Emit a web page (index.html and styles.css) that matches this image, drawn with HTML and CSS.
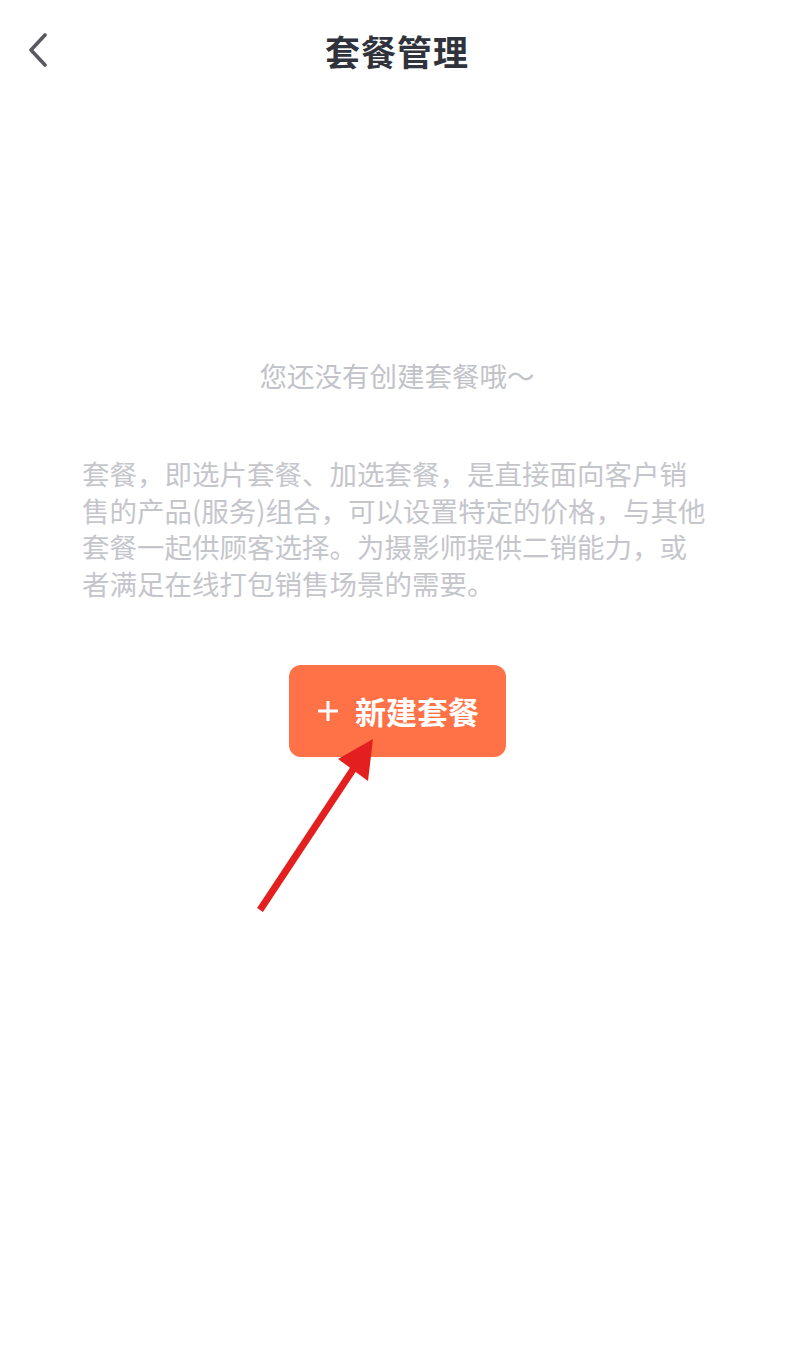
FILE: index.html
```html
<!DOCTYPE html>
<html lang="zh-CN">
<head>
  <meta charset="UTF-8">
  <meta name="viewport" content="width=device-width, initial-scale=1.0">
  <title>套餐管理</title>
  <link rel="stylesheet" href="styles.css">
</head>
<body>
  <header class="nav">
    <div class="back">
      <svg width="20" height="34" viewBox="0 0 20 34">
        <path d="M17 2 L3 17 L17 32" fill="none" stroke="#58595e" stroke-width="3.6" stroke-linecap="round" stroke-linejoin="round"/>
      </svg>
    </div>
    <div class="title">套餐管理</div>
  </header>
  <main class="content">
    <div class="empty">您还没有创建套餐哦～</div>
    <p class="desc">套餐，即选片套餐、加选套餐，是直接面向客户销售的产品(服务)组合，可以设置特定的价格，与其他套餐一起供顾客选择。为摄影师提供二销能力，或者满足在线打包销售场景的需要。</p>
    <button class="create">
      <svg class="plus" width="20" height="20" viewBox="0 0 20 20">
        <path d="M10 0 V20 M0 10 H20" stroke="#fff" stroke-width="3"/>
      </svg>
      新建套餐
    </button>
  </main>
  <svg class="arrow" width="799" height="1372" viewBox="0 0 799 1372">
    <line x1="260" y1="910" x2="354" y2="768" stroke="#e3201f" stroke-width="7"/>
    <polygon points="373,739 338,759 368,781" fill="#e3201f"/>
  </svg>
</body>
</html>
```

FILE: styles.css
```css
html, body { height: 100%; }

body {
  margin: 0;
  background-color: #fff;
  font-family: "Noto Sans CJK SC", "Noto Sans", sans-serif;
  position: relative;
}

.nav {
  height: 100px;
  display: flex;
  align-items: center;
  justify-content: center;
  padding-right: 5px;
  position: relative;
}

.back {
  position: absolute;
  left: 28px;
  top: 33px;
  width: 20px;
  height: 34px;
}

.title {
  font-size: 35px;
  font-weight: bold;
  color: #30323c;
  letter-spacing: 1px;
}

.content {
  display: flex;
  flex-direction: column;
  align-items: center;
  padding-top: 255px;
  padding-right: 5px;
}

.empty {
  font-size: 27.5px;
  line-height: 40px;
  color: #c2c3c9;
}

.desc {
  width: 630px;
  margin: 60px 0 0 0;
  font-size: 27.5px;
  line-height: 36.7px;
  color: #c5c6cc;
}

.create {
  margin-top: 63px;
  width: 217px;
  height: 92px;
  border: none;
  border-radius: 12px;
  background-color: #ff7248;
  color: #fff;
  font-family: inherit;
  font-size: 31px;
  font-weight: bold;
  display: flex;
  align-items: center;
  justify-content: center;
  padding: 0 0 0 3px;
}

.plus {
  margin-right: 17px;
}

.arrow {
  position: absolute;
  left: 0;
  top: 0;
  pointer-events: none;
}
```
